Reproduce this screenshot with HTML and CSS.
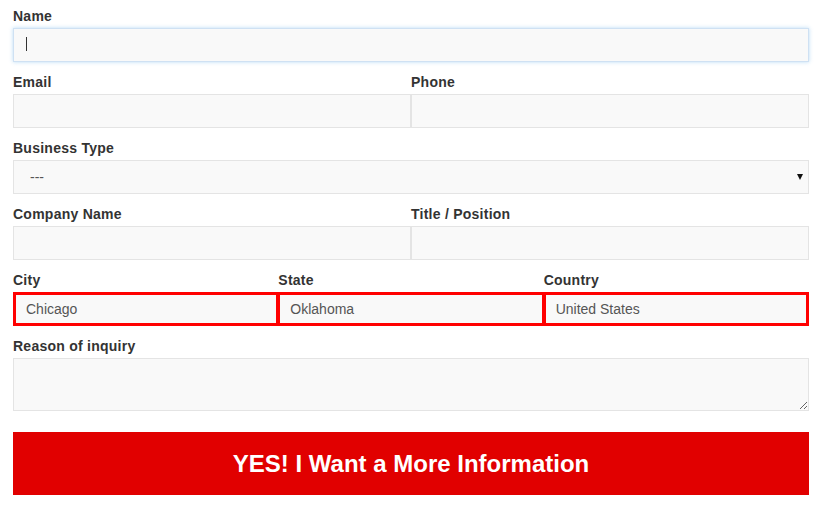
FILE: index.html
```html
<!DOCTYPE html>
<html>
<head>
<meta charset="utf-8">
<link rel="stylesheet" href="styles.css">
</head>
<body>
<form class="form">
  <div class="field">
    <label class="label">Name</label>
    <div class="caret-wrap">
      <input class="input focused" type="text">
      <span class="caret"></span>
    </div>
  </div>
  <div class="row two">
    <div class="field">
      <label class="label">Email</label>
      <input class="input" type="text">
    </div>
    <div class="field">
      <label class="label">Phone</label>
      <input class="input" type="text">
    </div>
  </div>
  <div class="field">
    <label class="label">Business Type</label>
    <div class="select-wrap">
      <select class="input select"><option>---</option></select>
      <span class="arrow"></span>
    </div>
  </div>
  <div class="row two">
    <div class="field">
      <label class="label">Company Name</label>
      <input class="input" type="text">
    </div>
    <div class="field">
      <label class="label">Title / Position</label>
      <input class="input" type="text">
    </div>
  </div>
  <div class="row three">
    <div class="field">
      <label class="label">City</label>
      <input class="input err first" type="text" value="Chicago">
    </div>
    <div class="field">
      <label class="label">State</label>
      <input class="input err mid" type="text" value="Oklahoma">
    </div>
    <div class="field">
      <label class="label">Country</label>
      <input class="input err last" type="text" value="United States">
    </div>
  </div>
  <div class="field">
    <label class="label">Reason of inquiry</label>
    <textarea class="input textarea"></textarea>
  </div>
  <button class="submit" type="button">YES! I Want a More Information</button>
</form>
</body>
</html>
```

FILE: styles.css
```css
* { box-sizing: border-box; }
html, body { margin: 0; padding: 0; background: #fff; }
body { font-family: "Liberation Sans", Arial, sans-serif; }

.form {
  width: 796px;
  margin: 0 0 0 13px;
  padding-top: 6px;
}

.field {
  display: flex;
  flex-direction: column;
  margin-bottom: 10px;
}

.row { display: grid; }
.row.two { grid-template-columns: 1fr 1fr; }
.row.three { grid-template-columns: 1fr 1fr 1fr; }

.label {
  font-size: 14px;
  font-weight: bold;
  line-height: 20px;
  letter-spacing: 0.25px;
  color: #333;
  margin-bottom: 2px;
}

.input {
  display: block;
  width: 100%;
  height: 34px;
  margin: 0;
  border: 1px solid #e4e4e4;
  background: #f9f9f9;
  font-family: "Liberation Sans", Arial, sans-serif;
  font-size: 14px;
  color: #555;
  padding: 0 10px;
  outline: none;
  border-radius: 0;
}

.focused {
  border-color: #cfe1f3;
  box-shadow: 0 0 4px rgba(102, 175, 233, 0.45);
}

.caret-wrap { position: relative; }
.caret {
  position: absolute;
  left: 13px;
  top: 9px;
  width: 1px;
  height: 14px;
  background: #333;
}

.select-wrap { position: relative; }
.select {
  appearance: none;
  -webkit-appearance: none;
  padding-left: 16px;
  color: #555;
}
.arrow {
  position: absolute;
  right: 6px;
  top: 14px;
  width: 0;
  height: 0;
  border-left: 3.5px solid transparent;
  border-right: 3.5px solid transparent;
  border-top: 6px solid #111;
}

.err {
  border: 3px solid #ff0000;
  padding-left: 10px;
}
.err.first { border-right-width: 2px; }
.err.mid { border-left-width: 2px; border-right-width: 2px; }
.err.last { border-left-width: 2px; }

.textarea {
  height: 53px;
  resize: vertical;
  padding: 6px 10px;
}

.submit {
  display: block;
  width: 100%;
  height: 63px;
  margin-top: 21px;
  border: none;
  background: #e10000;
  color: #fff;
  font-family: "Liberation Sans", Arial, sans-serif;
  font-weight: bold;
  font-size: 24px;
  padding: 0;
  cursor: pointer;
}
```
